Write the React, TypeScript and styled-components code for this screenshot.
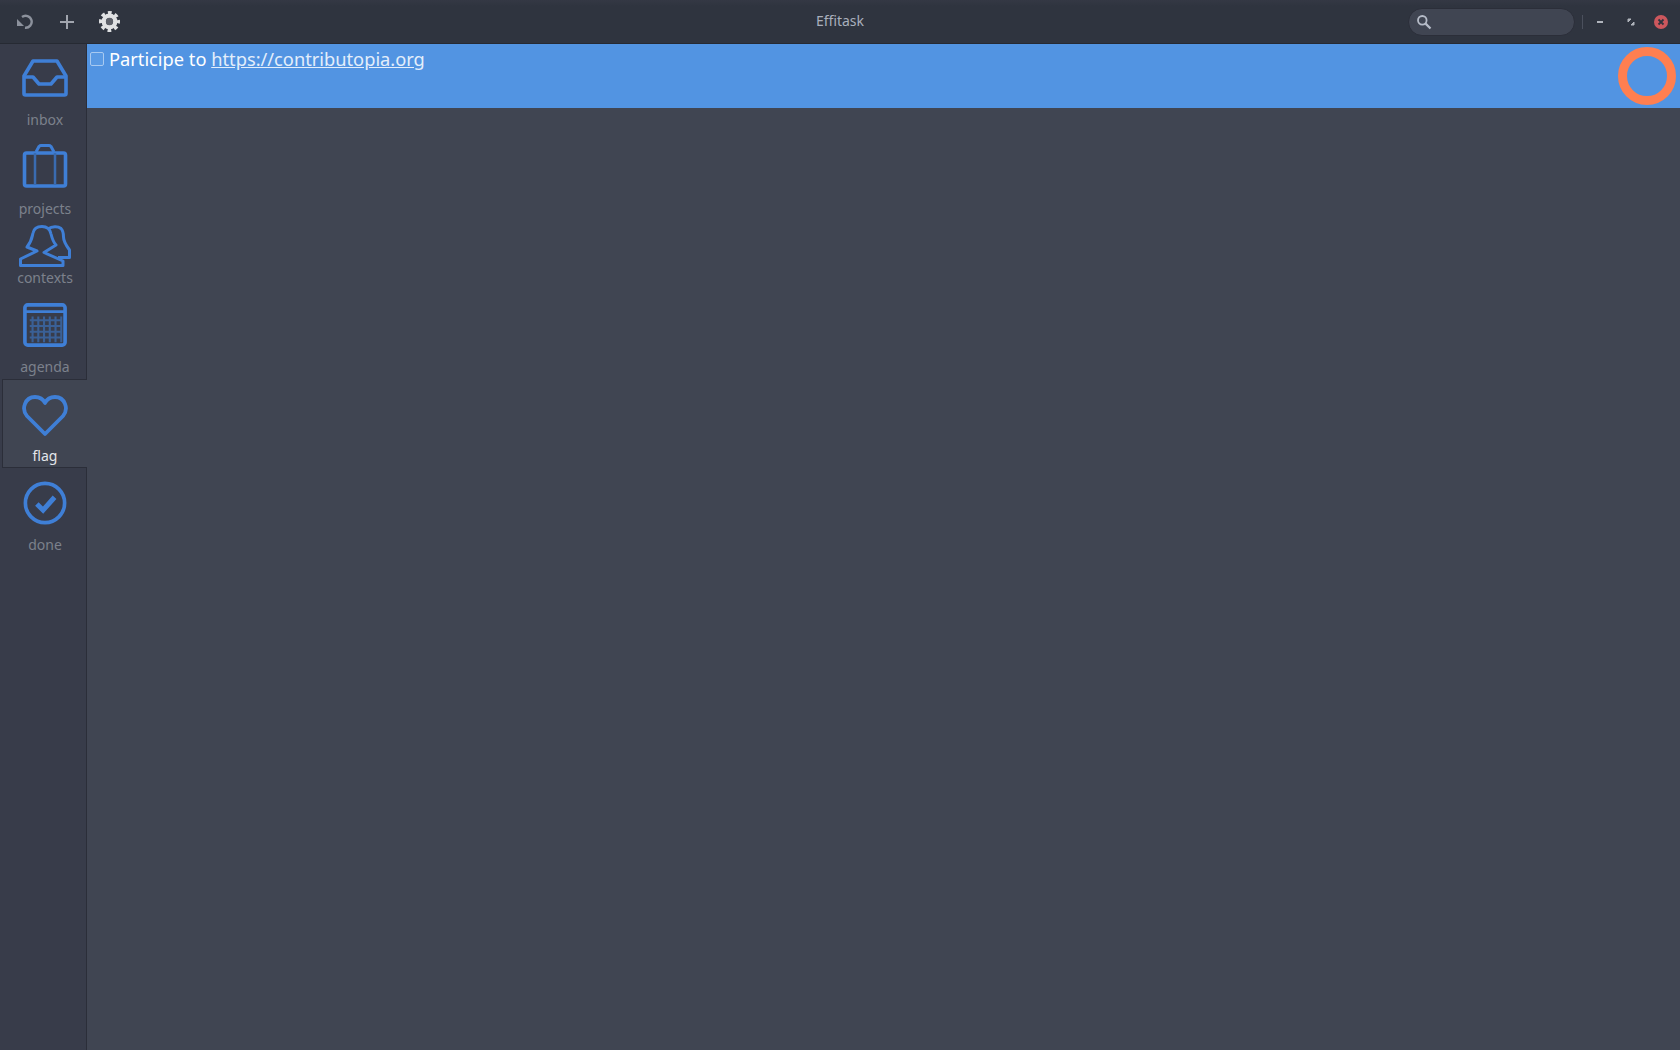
import React from 'react';
import styled, { createGlobalStyle } from 'styled-components';

const Global = createGlobalStyle`
  html, body { margin: 0; height: 100%; background: #404552; overflow: hidden; }
  #root { height: 100%; }
`;

const Window = styled.div`
  width: 1680px;
  height: 1050px;
  display: flex;
  flex-direction: column;
  font-family: 'Noto Sans', sans-serif;
  background: #404552;
`;

const HeaderBar = styled.header`
  height: 43px;
  flex: none;
  display: flex;
  align-items: center;
  position: relative;
  background: linear-gradient(#343844, #2f343f 6px);
  border-bottom: 1px solid #262a33;
`;

const ToolIcons = styled.div`
  display: flex;
  align-items: center;
  gap: 25px;
  padding-left: 16px;
`;

const Title = styled.div`
  position: absolute;
  left: 0;
  right: 0;
  top: 11px;
  text-align: center;
  font-size: 14px;
  line-height: 20px;
  color: #a9afbc;
  pointer-events: none;
`;

const RightTools = styled.div`
  margin-left: auto;
  display: flex;
  align-items: center;
  height: 100%;
`;

const SearchBox = styled.div`
  width: 167px;
  height: 28px;
  border: 1px solid #2b2e39;
  border-radius: 14px;
  background: #404552;
  display: flex;
  align-items: center;
  padding-left: 7px;
  box-sizing: border-box;
  margin-right: 7px;
`;

const Separator = styled.div`
  width: 1px;
  height: 14px;
  background: #4b505d;
  margin-right: 10px;
`;

const WinButton = styled.div<{ $gap: number }>`
  width: 14px;
  height: 14px;
  margin-right: ${(p) => p.$gap}px;
  display: flex;
  align-items: center;
  justify-content: center;
`;

const Body = styled.div`
  flex: 1;
  display: flex;
  min-height: 0;
`;

const Sidebar = styled.nav`
  width: 86px;
  flex: none;
  background: #383c4a;
  border-right: 1px solid #2b2e39;
  display: flex;
  flex-direction: column;
`;

const NavItem = styled.div<{ $h: number; $active?: boolean; $pad: number }>`
  height: ${(p) => p.$h}px;
  box-sizing: border-box;
  display: flex;
  flex-direction: column;
  align-items: center;
  padding-top: ${(p) => p.$pad}px;
  padding-left: 4px;
  color: ${(p) => (p.$active ? '#e4e6ea' : '#7c818c')};
  ${(p) =>
    p.$active &&
    `
    background: #404552;
    margin-left: 2px;
    margin-right: -1px;
    border: 1px solid #2b2e39;
    border-right: none;
    padding-left: 0;
  `}
`;

const NavLabel = styled.span`
  font-size: 14px;
  line-height: 18px;
  text-align: center;
`;

const IconBox = styled.div<{ $h: number }>`
  height: ${(p) => p.$h}px;
  display: flex;
  justify-content: center;
  align-items: flex-start;
`;

const Main = styled.main`
  flex: 1;
  min-width: 0;
  display: flex;
  flex-direction: column;
`;

const TaskRow = styled.div`
  height: 64px;
  background: #5294e2;
  display: flex;
  align-items: flex-start;
  position: relative;
  box-sizing: border-box;
  padding: 3px 0 0 3px;
`;

const Check = styled.div`
  width: 12px;
  height: 12px;
  margin-top: 5px;
  border: 1px solid #a8caf1;
  border-radius: 2px;
  background: #5a9ae4;
`;

const TaskText = styled.div`
  margin-left: 5px;
  font-size: 18.25px;
  line-height: 24px;
  color: #fff;
`;

const TaskLink = styled.a`
  color: #e3eefb;
  text-decoration: underline;
`;

const Ring = styled.div`
  position: absolute;
  right: 4px;
  top: 3px;
  width: 58px;
  height: 58px;
  box-sizing: border-box;
  border: 9px solid #ff7f50;
  border-radius: 50%;
`;

const blue = '#3f7fd6';

const InboxIcon = () => (
  <svg width="46" height="38" viewBox="0 0 46 38" fill="none" stroke={blue} strokeWidth="3.6" strokeLinejoin="round">
    <path d="M2 17 L11 2 H35 L44 17 V34.5 Q44 36 42.5 36 H3.5 Q2 36 2 34.5 Z" />
    <path d="M2 18 H11 L17 25 H29 L35 18 H44" />
  </svg>
);

const ProjectsIcon = () => (
  <svg width="46" height="44" viewBox="0 0 46 44" fill="none">
    <rect x="2.5" y="9" width="41" height="33" rx="2" stroke={blue} strokeWidth="3.6" />
    <path d="M14 8 L17 2.5 Q18 1.5 19 1.5 H27 Q28 1.5 29 2.5 L32 8" stroke={blue} strokeWidth="3" />
    <path d="M13 9 V41 M33 9 V41" stroke="#3a6bb0" strokeWidth="2.5" />
  </svg>
);

const ContextsIcon = () => (
  <svg width="52" height="42" viewBox="0 0 52 42" fill="none" stroke={blue} strokeWidth="3" strokeLinejoin="round">
    <path d="M1.5 40.5 V34 L18 26 L8 22 C13 16 13 12 14 8 C15 3 19 1.5 23 1.5 C28 1.5 31 4 32 9 C33 13 34 17 37 20 L25 27.5 L44 36 V40.5 Z" />
    <path d="M29 4 C33 1 39 1 42 3.5 C44.5 6 44.5 9 44.5 12 C44.5 16 46 19 50.5 25 V32.5 H39" />
  </svg>
);

const AgendaIcon = () => (
  <svg width="44" height="44" viewBox="0 0 46 46" fill="none">
    <rect x="2" y="2" width="42" height="42" rx="3" stroke={blue} strokeWidth="3.8" />
    <path d="M2 9 H44" stroke={blue} strokeWidth="3" />
    <path
      d="M7 18 H41 M7 24 H41 M7 30 H41 M7 36 H41 M10 14 V41 M16 14 V41 M22 14 V41 M28 14 V41 M34 14 V41 M40 14 V41"
      stroke="#3a6096"
      strokeWidth="2.2"
    />
  </svg>
);

const HeartIcon = () => (
  <svg width="46" height="42" viewBox="0 0 46 42" fill="none" stroke={blue} strokeWidth="3.8" strokeLinejoin="round">
    <path d="M23 39 L5 21 C-1 14 3 2 13 2 C18 2 21 4 23 8 C25 4 28 2 33 2 C43 2 47 14 41 21 Z" />
  </svg>
);

const DoneIcon = () => (
  <svg width="44" height="44" viewBox="0 0 46 46" fill="none">
    <circle cx="23" cy="23" r="20.5" stroke={blue} strokeWidth="3.8" />
    <path d="M14.5 24 L21 30.5 L33 17" stroke={blue} strokeWidth="5.2" />
  </svg>
);

const items = [
  { label: 'inbox', Icon: InboxIcon, h: 89, pad: 15, iconH: 52 },
  { label: 'projects', Icon: ProjectsIcon, h: 89, pad: 11, iconH: 56 },
  { label: 'contexts', Icon: ContextsIcon, h: 69, pad: 3, iconH: 44 },
  { label: 'agenda', Icon: AgendaIcon, h: 88, pad: 12, iconH: 55 },
  { label: 'flag', Icon: HeartIcon, h: 89, pad: 15, iconH: 52, active: true },
  { label: 'done', Icon: DoneIcon, h: 89, pad: 13, iconH: 55 },
];

export default function App() {
  return (
    <>
      <Global />
      <Window>
        <HeaderBar>
          <ToolIcons>
            <svg width="19" height="16" viewBox="0 0 19 16" fill="none">
              <path d="M6 3 A6 6 0 1 1 9 13.7" stroke="#8c919c" strokeWidth="2.4" />
              <path d="M1 5 V12 H8 Z" fill="#8c919c" />
            </svg>
            <svg width="14" height="14" viewBox="0 0 14 14" fill="none">
              <path d="M7 0 V14 M0 7 H14" stroke="#a1a5ae" strokeWidth="2" />
            </svg>
            <svg width="21" height="21" viewBox="0 0 22 22" fill="none">
              <circle cx="11" cy="11" r="6" stroke="#e0e1e3" strokeWidth="4.6" />
              <circle
                cx="11"
                cy="11"
                r="9"
                stroke="#e0e1e3"
                strokeWidth="4"
                strokeDasharray="3.8 3.27"
                strokeDashoffset="1.9"
              />
              <circle cx="11" cy="11" r="3.8" fill="#5d6069" />
            </svg>
          </ToolIcons>
          <Title>Effitask</Title>
          <RightTools>
            <SearchBox>
              <svg width="16" height="16" viewBox="0 0 16 16" fill="none">
                <circle cx="6.3" cy="6.3" r="4.3" stroke="#b6bcc8" strokeWidth="1.8" />
                <path d="M9.6 9.6 L14.5 14.5" stroke="#b6bcc8" strokeWidth="2.2" />
              </svg>
            </SearchBox>
            <Separator />
            <WinButton $gap={17}>
              <svg width="8" height="4" viewBox="0 0 8 4">
                <rect x="1" y="1" width="6" height="2" fill="#b0b4bc" />
              </svg>
            </WinButton>
            <WinButton $gap={16}>
              <svg width="8" height="8" viewBox="0 0 8 8">
                <path d="M1 4 L4 1 H1 Z M7 4 L4 7 H7 Z" fill="#b0b4bc" stroke="#b0b4bc" />
              </svg>
            </WinButton>
            <WinButton $gap={12}>
              <svg width="14" height="14" viewBox="0 0 14 14">
                <circle cx="7" cy="7" r="7" fill="#cc575d" />
                <path d="M4.5 4.5 L9.5 9.5 M9.5 4.5 L4.5 9.5" stroke="#2f343f" strokeWidth="1.8" />
              </svg>
            </WinButton>
          </RightTools>
        </HeaderBar>
        <Body>
          <Sidebar>
            {items.map(({ label, Icon, h, pad, iconH, active }) => (
              <NavItem key={label} $h={h} $pad={pad} $active={active}>
                <IconBox $h={iconH}>
                  <Icon />
                </IconBox>
                <NavLabel>{label}</NavLabel>
              </NavItem>
            ))}
          </Sidebar>
          <Main>
            <TaskRow>
              <Check />
              <TaskText>
                Participe to <TaskLink href="#">https://contributopia.org</TaskLink>
              </TaskText>
              <Ring />
            </TaskRow>
          </Main>
        </Body>
      </Window>
    </>
  );
}
